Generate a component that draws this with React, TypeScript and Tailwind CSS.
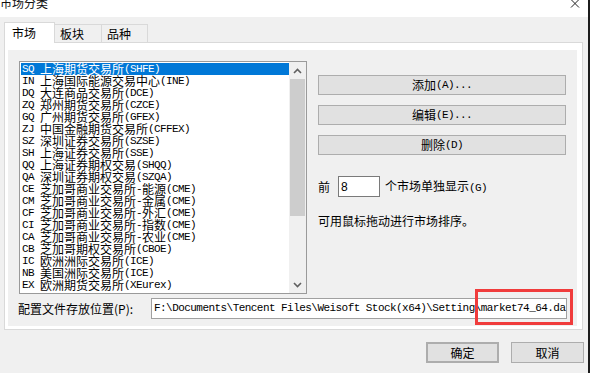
import React from "react";

const items = [
  "SQ 上海期货交易所(SHFE)",
  "IN 上海国际能源交易中心(INE)",
  "DQ 大连商品交易所(DCE)",
  "ZQ 郑州期货交易所(CZCE)",
  "GQ 广州期货交易所(GFEX)",
  "ZJ 中国金融期货交易所(CFFEX)",
  "SZ 深圳证券交易所(SZSE)",
  "SH 上海证券交易所(SSE)",
  "QQ 上海证券期权交易(SHQQ)",
  "QA 深圳证券期权交易(SZQA)",
  "CE 芝加哥商业交易所-能源(CME)",
  "CM 芝加哥商业交易所-金属(CME)",
  "CF 芝加哥商业交易所-外汇(CME)",
  "CI 芝加哥商业交易所-指数(CME)",
  "CA 芝加哥商业交易所-农业(CME)",
  "CB 芝加哥期权交易所(CBOE)",
  "IC 欧洲洲际交易所(ICE)",
  "NB 美国洲际交易所(ICE)",
  "EX 欧洲期货交易所(XEurex)",
];

function T({ s }: { s: string }) {
  const parts = s.match(/[\x00-\x7f]+|[^\x00-\x7f]+/g) || [];
  return (
    <>
      {parts.map((p, i) =>
        /[\x00-\x7f]/.test(p[0]) ? (
          <span
            key={i}
            className="font-['Liberation_Mono',monospace] text-[11px] tracking-[-0.6px] whitespace-pre"
          >
            {p}
          </span>
        ) : (
          <span key={i}>{p}</span>
        )
      )}
    </>
  );
}

function Btn({ label, cls }: { label: string; cls: string }) {
  return (
    <div
      className={
        "flex items-center justify-center bg-[#e1e1e1] border border-[#adadad] text-[12px] leading-[12px] " +
        cls
      }
    >
      <T s={label} />
    </div>
  );
}

export default function App() {
  return (
    <div className="relative w-[590px] h-[373px] flex overflow-hidden font-['Noto_Sans_CJK_SC',sans-serif] text-black">
      <div className="w-[588px] flex flex-col bg-[#f0f0f0]">
        {/* title bar */}
        <div className="h-[17px] bg-white flex justify-between pr-[8px]">
          <div className="text-[12px] leading-[12px] -mt-[3px] text-[#111]">市场分类</div>
          <svg width="10" height="10" viewBox="0 0 10 10" className="-mt-[1px]">
            <path d="M1 0.5 L9 8.5 M9 0.5 L1 8.5" stroke="#222" strokeWidth="1" />
          </svg>
        </div>

        {/* tabs */}
        <div className="mt-[5px] pl-[4px] flex items-end h-[20px] text-[12px] leading-[12px]">
          <div className="relative z-10 -mb-[1px] h-[21px] w-[51px] bg-white border-l border-t border-r border-[#d9d9d9] flex items-center pl-[7px]">
            市场
          </div>
          <div className="h-[18px] w-[47px] border-t border-r border-[#d9d9d9] flex items-center pl-[5px] pt-[1px]">
            板块
          </div>
          <div className="h-[18px] w-[46px] border-t border-r border-[#d9d9d9] flex items-center pl-[5px] pt-[1px]">
            品种
          </div>
        </div>

        {/* tab panel */}
        <div className="ml-[4px] w-[579px] h-[288px] border border-[#d9d9d9] bg-white pt-[7px] pl-[3px]">
          <div className="w-[569px] h-[276px] bg-[#f0f0f0] flex flex-col pt-[11px]">
            <div className="flex pl-[11px]">
              {/* listbox */}
              <div className="w-[288px] h-[233px] border border-[#9a9a9a] bg-white flex">
                <div className="w-[269px] pt-[1px] pl-[1px] text-[12px] leading-[12px]">
                  {items.map((it, i) => (
                    <div
                      key={i}
                      className={
                        "h-[12px] pl-[1px] whitespace-nowrap flex items-center " +
                        (i === 0 ? "bg-[#0078d7] text-white" : "text-black")
                      }
                    >
                      <T s={it} />
                    </div>
                  ))}
                </div>
                <div className="w-[17px] bg-[#f0f0f0] flex flex-col items-center">
                  <div className="h-[17px] flex items-center justify-center">
                    <svg width="9" height="6" viewBox="0 0 9 6">
                      <path d="M1 5 L4.5 1.5 L8 5" stroke="#606060" strokeWidth="1.6" fill="none" />
                    </svg>
                  </div>
                  <div className="w-[15px] h-[137px] bg-[#cdcdcd]" />
                  <div className="flex-1" />
                  <div className="h-[17px] flex items-center justify-center">
                    <svg width="9" height="6" viewBox="0 0 9 6">
                      <path d="M1 1 L4.5 4.5 L8 1" stroke="#606060" strokeWidth="1.6" fill="none" />
                    </svg>
                  </div>
                </div>
              </div>

              {/* right column */}
              <div className="ml-[11px] pt-[14px] flex flex-col">
                <Btn label="添加(A)..." cls="w-[248px] h-[20px]" />
                <Btn label="编辑(E)..." cls="w-[248px] h-[20px] mt-[10px]" />
                <Btn label="删除(D)" cls="w-[248px] h-[20px] mt-[10px]" />
                <div className="mt-[21px] flex items-center text-[12px] leading-[12px]">
                  <span>前</span>
                  <div className="ml-[8px] w-[42px] h-[21px] bg-white border border-[#7a7a7a] flex items-center pl-[2px]">
                    <span className="font-['Liberation_Sans',sans-serif] text-[12px]">8</span>
                  </div>
                  <span className="ml-[5px]">
                    <T s="个市场单独显示(G)" />
                  </span>
                </div>
                <div className="mt-[18px] text-[12px] leading-[12px]">可用鼠标拖动进行市场排序。</div>
              </div>
            </div>

            {/* path row */}
            <div className="mt-[4px] pl-[10px] flex items-center">
              <div className="w-[133px] text-[12px] leading-[12px]">
                配置文件存放位置(P):
              </div>
              <div className="w-[416px] h-[21px] bg-white border border-[#a0a0a0] flex items-center pl-[2px] overflow-hidden">
                <span className="font-['Liberation_Mono',monospace] text-[11px] tracking-[-0.55px] whitespace-pre">
                  {"F:\\Documents\\Tencent Files\\Weisoft Stock(x64)\\Setting\\market74_64.dat"}
                </span>
              </div>
            </div>
          </div>
        </div>

        {/* bottom buttons */}
        <div className="mt-[12px] flex justify-end pr-[4px] gap-[12px]">
          <Btn label="确定" cls="w-[73px] h-[21px] border-2 border-[#0078d7]" />
          <Btn label="取消" cls="w-[73px] h-[21px]" />
        </div>
      </div>
      <div className="w-[2px] bg-[#1c1c1c]" />

      {/* red annotation box */}
      <div className="absolute left-[475px] top-[289px] w-[98px] h-[36px] border-[3px] border-[#f03c3c]" />
    </div>
  );
}
